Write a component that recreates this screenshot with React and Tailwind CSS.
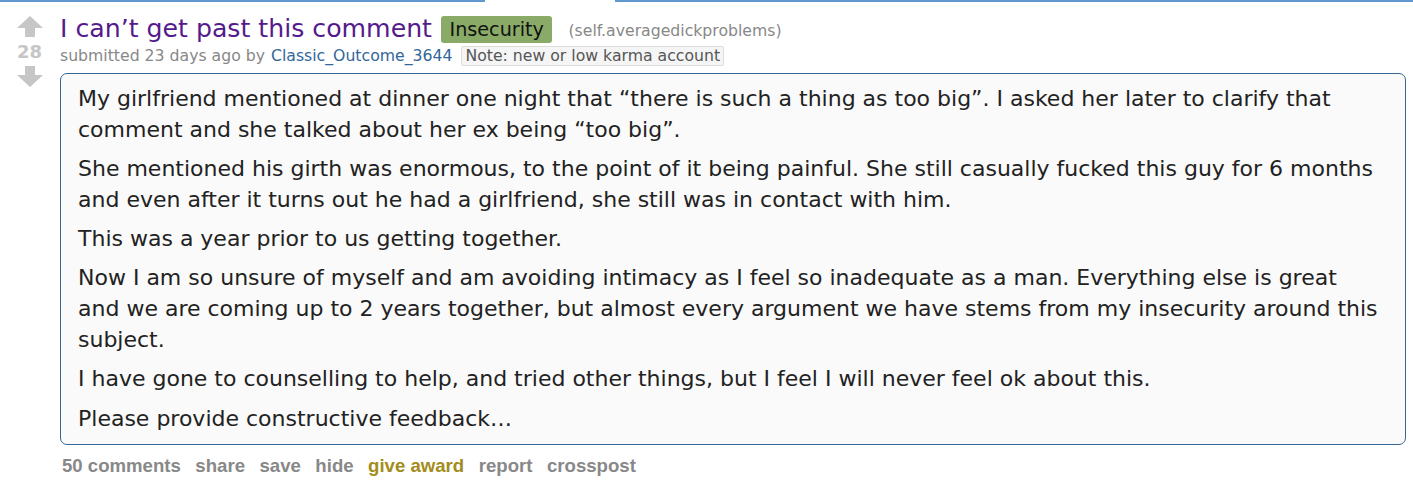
import React from 'react';

const paragraphs = [
  'My girlfriend mentioned at dinner one night that \u201cthere is such a thing as too big\u201d. I asked her later to clarify that comment and she talked about her ex being \u201ctoo big\u201d.',
  'She mentioned his girth was enormous, to the point of it being painful. She still casually fucked this guy for 6 months and even after it turns out he had a girlfriend, she still was in contact with him.',
  'This was a year prior to us getting together.',
  'Now I am so unsure of myself and am avoiding intimacy as I feel so inadequate as a man. Everything else is great and we are coming up to 2 years together, but almost every argument we have stems from my insecurity around this subject.',
  'I have gone to counselling to help, and tried other things, but I feel I will never feel ok about this.',
  'Please provide constructive feedback\u2026',
];

const links = ['50 comments', 'share', 'save', 'hide', 'give award', 'report', 'crosspost'];

function Arrow({ down }) {
  return (
    <svg width="26" height="21" viewBox="0 0 26 21" className={down ? 'rotate-180' : ''}>
      <path d="M13 0 L26 12 L18 12 L18 21 L8 21 L8 12 L0 12 Z" fill="#c6c6c6" />
    </svg>
  );
}

export default function App() {
  return (
    <div className="w-[1413px] h-[484px] bg-white overflow-hidden" style={{ fontFamily: '"DejaVu Sans", Verdana, sans-serif' }}>
      {/* tab strip line */}
      <div className="flex h-[2px]">
        <div className="w-[485px] bg-[#5f99cf]" />
        <div className="w-[130px]" />
        <div className="flex-1 bg-[#5f99cf]" />
      </div>

      <div className="flex">
        {/* votes */}
        <div className="w-[60px] flex flex-col items-center pt-[14px] pr-[1px]">
          <Arrow />
          <div className="text-[18px] font-bold text-[#c6c6c6] leading-[28px] mt-[1px]">28</div>
          <Arrow down />
        </div>

        <div className="flex-1 pr-[7px]">
          <div className="flex items-center h-[32px] mt-[11px]">
            <span className="text-[25.2px] text-[#551a8b] leading-[32px]">I can’t get past this comment</span>
            <span className="ml-[9px] bg-[#8aab67] text-[#111] text-[19.2px] leading-[27px] px-[8.5px] rounded-[3px]">Insecurity</span>
            <span className="ml-[16px] text-[15.7px] text-[#888] mt-[3px]">(self.averagedickproblems)</span>
          </div>
          <div className="flex items-center text-[15.7px] text-[#888] h-[22px]">
            <span>submitted 23 days ago by</span>
            <span className="ml-[6px] text-[#369]">Classic_Outcome_3644</span>
            <span className="ml-[9px] border border-[#ddd] bg-[#f5f5f5] text-[#555] px-[3px] leading-[18px] rounded-[2px]">Note: new or low karma account</span>
          </div>

          <div className="mt-[6px] border border-[#369] rounded-[7px] bg-[#fafafa] pl-[17px] pr-[20px] pt-[10px] pb-[10px] text-[#222] text-[22px] leading-[30.8px] flex flex-col gap-[8.5px]">
            {paragraphs.map((p, i) => (
              <p key={i}>{p}</p>
            ))}
          </div>

          <div className="flex gap-[14.5px] mt-[7px] ml-[2px] text-[18.6px] font-bold text-[#888]" style={{ fontFamily: '"Liberation Sans", Arial, sans-serif' }}>
            {links.map((l) => (
              <span key={l} className={l === 'give award' ? 'text-[#a38c1b]' : ''}>{l}</span>
            ))}
          </div>
        </div>
      </div>
    </div>
  );
}
